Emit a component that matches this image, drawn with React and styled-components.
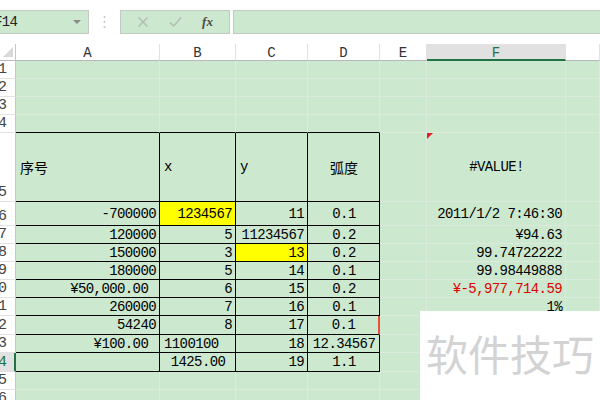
import React from 'react';
import styled, { createGlobalStyle } from 'styled-components';

const GlobalStyle = createGlobalStyle`
  html, body {
    margin: 0;
    padding: 0;
    background: #fff;
    overflow: hidden;
  }
`;

const GREEN = '#cce8cf';
const GRID = '#dbeadc';
const ACTIVE = '#217346';
const MONO = `"Liberation Mono", "Noto Sans CJK SC", monospace`;

const Page = styled.div`
  position: relative;
  width: 600px;
  height: 400px;
  overflow: hidden;
  background: #fff;
  font-family: ${MONO};
`;

const FormulaBar = styled.div`
  height: 44px;
  box-sizing: border-box;
  padding: 10px 0;
  display: flex;
  align-items: stretch;
`;

const Box = styled.div`
  box-sizing: border-box;
  background: ${GREEN};
  border: 1px solid #c2c9c2;
  display: flex;
  align-items: center;
`;

const NameBox = styled(Box)`
  width: 100px;
  margin-left: -11px;
  padding: 0 7px 0 4px;
  font-size: 14px;
  letter-spacing: -0.6px;
  color: #222;
`;

const NameText = styled.span`
  flex: 1;
`;

const DropArrow = styled.span`
  width: 0;
  height: 0;
  border-left: 4px solid transparent;
  border-right: 4px solid transparent;
  border-top: 4px solid #8a8a8a;
`;

const Dots = styled.div`
  width: 31px;
  display: flex;
  align-items: center;
  justify-content: center;
`;

const FxBox = styled(Box)`
  width: 110px;
  justify-content: space-around;
  padding: 0 6px;
`;

const FxText = styled.span`
  font-family: "Liberation Serif", serif;
  font-style: italic;
  font-weight: bold;
  font-size: 13px;
  color: #4a4a4a;
`;

const FormulaInput = styled(Box)`
  flex: 1;
  margin-left: 3px;
  margin-right: -2px;
`;

const Sheet = styled.div`
  display: grid;
  grid-template-columns: 16px 144px 76px 72px 72px 47px 139px 1fr;
  grid-template-rows: ${p => p.$rows};
`;

const Corner = styled.div`
  box-sizing: border-box;
  background: #fff;
  border-right: 1px solid #c6c6c6;
  border-bottom: 1px solid #b8b8b8;
  display: flex;
  align-items: flex-end;
  justify-content: flex-end;
  padding: 0 2px 3px 0;
`;

const CornerMark = styled.span`
  width: 0;
  height: 0;
  border-left: 10px solid transparent;
  border-bottom: 10px solid #d8d8d8;
`;

const ColHead = styled.div`
  box-sizing: border-box;
  background: ${p => (p.$active ? '#e1e1e1' : '#fff')};
  border-right: 1px solid #e2e2e2;
  border-bottom: ${p => (p.$active ? `2px solid ${ACTIVE}` : '1px solid #b8b8b8')};
  color: ${p => (p.$active ? ACTIVE : '#333')};
  font-size: 14px;
  display: flex;
  align-items: center;
  justify-content: center;
  padding-top: 2px;
`;

const RowHead = styled.div`
  box-sizing: border-box;
  background: ${p => (p.$active ? '#e1e1e1' : '#fff')};
  border-right: ${p => (p.$active ? `2px solid ${ACTIVE}` : '1px solid #c6c6c6')};
  border-bottom: 1px solid #e2e2e2;
  color: ${p => (p.$active ? ACTIVE : '#444')};
  font-size: 15px;
  display: flex;
  align-items: flex-end;
  justify-content: flex-end;
  padding-right: ${p => (p.$active ? '7px' : '8px')};
  overflow: hidden;
  line-height: 17px;
`;

const ALIGN = { left: 'flex-start', right: 'flex-end', center: 'center' };

const Cell = styled.div`
  position: relative;
  box-sizing: border-box;
  min-width: 0;
  background: ${p => p.$bg || GREEN};
  border-right: ${p => p.$br || `1px solid ${GRID}`};
  border-bottom: 1px solid ${p => p.$bb || GRID};
  color: ${p => p.$color || '#000'};
  display: flex;
  align-items: center;
  justify-content: ${p => ALIGN[p.$align || 'right']};
  padding: 0 3px 0 4px;
  white-space: pre;
  font-family: ${p => (p.$cjk ? `"Noto Sans CJK SC", sans-serif` : MONO)};
  font-size: 14px;
  letter-spacing: ${p => (p.$cjk ? '0' : '-0.6px')};
`;

const NoteMark = styled.span`
  position: absolute;
  top: 0;
  left: 0;
  width: 0;
  height: 0;
  border-top: 6px solid #e02020;
  border-right: 6px solid transparent;
`;

const Watermark = styled.div`
  position: absolute;
  left: 420px;
  top: 311px;
  width: 180px;
  height: 89px;
  background: #fff;
  box-sizing: border-box;
  padding: 19px 0 0 6px;
  font-family: "Noto Sans CJK SC", sans-serif;
  font-size: 42px;
  line-height: 46px;
  color: #d3d3d3;
  white-space: nowrap;
`;

const COLS = ['A', 'B', 'C', 'D', 'E', 'F', 'G'];

const ROWS = [
  { n: 1, h: 18 },
  { n: 2, h: 18 },
  { n: 3, h: 18 },
  { n: 4, h: 18 },
  {
    n: 5, h: 69, cells: {
      A: { t: '序号', a: 'left', cjk: true },
      B: { t: 'x', a: 'left' },
      C: { t: 'y', a: 'left' },
      D: { t: '弧度', a: 'center', cjk: true },
      F: { t: '#VALUE!', a: 'center', note: true },
    },
  },
  {
    n: 6, h: 24, cells: {
      A: { t: '-700000' }, B: { t: '1234567', bg: '#ffff00' }, C: { t: '11' },
      D: { t: '0.1', a: 'center' }, F: { t: '2011/1/2 7:46:30' },
    },
  },
  {
    n: 7, h: 18, cells: {
      A: { t: '120000' }, B: { t: '5' }, C: { t: '11234567' },
      D: { t: '0.2', a: 'center' }, F: { t: '¥94.63' },
    },
  },
  {
    n: 8, h: 18, cells: {
      A: { t: '150000' }, B: { t: '3' }, C: { t: '13', bg: '#ffff00' },
      D: { t: '0.2', a: 'center' }, F: { t: '99.74722222' },
    },
  },
  {
    n: 9, h: 18, cells: {
      A: { t: '180000' }, B: { t: '5' }, C: { t: '14' },
      D: { t: '0.1', a: 'center' }, F: { t: '99.98449888' },
    },
  },
  {
    n: 10, h: 18, cells: {
      A: { t: '¥50,000.00 ' }, B: { t: '6' }, C: { t: '15' },
      D: { t: '0.2', a: 'center' }, F: { t: '¥-5,977,714.59', color: '#e00000' },
    },
  },
  {
    n: 11, h: 18, cells: {
      A: { t: '260000' }, B: { t: '7' }, C: { t: '16' },
      D: { t: '0.1', a: 'center' }, F: { t: '1%' },
    },
  },
  {
    n: 12, h: 19, cells: {
      A: { t: '54240' }, B: { t: '8' }, C: { t: '17' },
      D: { t: '0.1', a: 'center', flag: true },
    },
  },
  {
    n: 13, h: 18, cells: {
      A: { t: '¥100.00 ' }, B: { t: '1100100', a: 'left' }, C: { t: '18' },
      D: { t: '12.34567', a: 'center' },
    },
  },
  {
    n: 14, h: 19, active: true, cells: {
      B: { t: '1425.00', a: 'center' }, C: { t: '19' }, D: { t: '1.1', a: 'center' },
    },
  },
  { n: 15, h: 18 },
  { n: 16, h: 18 },
];

const inTable = (n, col) => n >= 5 && n <= 14 && 'ABCD'.includes(col);

function Sep() {
  return (
    <svg width="3" height="14" viewBox="0 0 3 14">
      <circle cx="1.5" cy="2" r="1" fill="#c4c4c4" />
      <circle cx="1.5" cy="7" r="1" fill="#c4c4c4" />
      <circle cx="1.5" cy="12" r="1" fill="#c4c4c4" />
    </svg>
  );
}

function CrossIcon() {
  return (
    <svg width="12" height="12" viewBox="0 0 12 12">
      <path d="M1.5 1.5 L10.5 10.5 M10.5 1.5 L1.5 10.5" stroke="#b3bcb4" strokeWidth="1.4" fill="none" />
    </svg>
  );
}

function CheckIcon() {
  return (
    <svg width="13" height="12" viewBox="0 0 13 12">
      <path d="M1 6.5 L4.8 10 L12 1.5" stroke="#b3bcb4" strokeWidth="1.4" fill="none" />
    </svg>
  );
}

export default function App() {
  const rowTemplate = ['17px', ...ROWS.map(r => `${r.h}px`)].join(' ');

  return (
    <Page>
      <GlobalStyle />
      <FormulaBar>
        <NameBox>
          <NameText>F14</NameText>
          <DropArrow />
        </NameBox>
        <Dots><Sep /></Dots>
        <FxBox>
          <CrossIcon />
          <CheckIcon />
          <FxText>fx</FxText>
        </FxBox>
        <FormulaInput />
      </FormulaBar>

      <Sheet $rows={rowTemplate}>
        <Corner><CornerMark /></Corner>
        {COLS.map(c => (
          <ColHead key={c} $active={c === 'F'}>{c === 'G' ? '' : c}</ColHead>
        ))}

        {ROWS.map(row => (
          <React.Fragment key={row.n}>
            <RowHead $active={row.active}>{row.n}</RowHead>
            {COLS.map(col => {
              const cell = (row.cells && row.cells[col]) || {};
              const table = inTable(row.n, col);
              const topEdge = row.n === 4 && 'ABCD'.includes(col);
              let br;
              if (cell.flag) br = '2px solid #e8503a';
              else if (table) br = '1px solid #000';
              return (
                <Cell
                  key={col}
                  $align={cell.a}
                  $bg={cell.bg}
                  $color={cell.color}
                  $cjk={cell.cjk}
                  $br={br}
                  $bb={table || topEdge ? '#000' : undefined}
                >
                  {cell.note && <NoteMark />}
                  {cell.t || ''}
                </Cell>
              );
            })}
          </React.Fragment>
        ))}
      </Sheet>

      <Watermark>软件技巧</Watermark>
    </Page>
  );
}
